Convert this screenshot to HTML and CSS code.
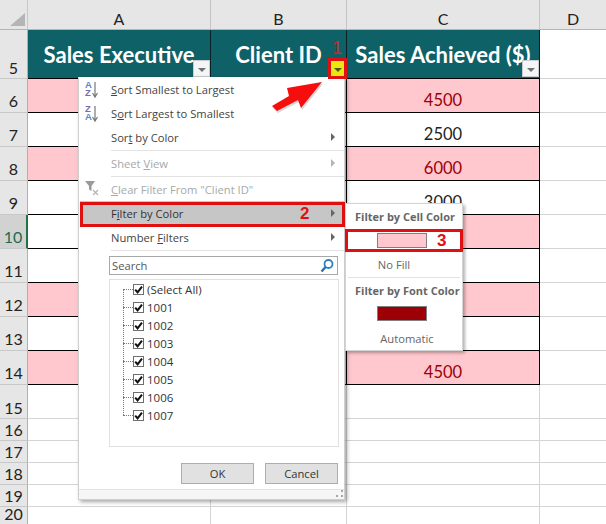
FILE: index.html
```html
<!DOCTYPE html>
<html lang="en">
<head>
<meta charset="utf-8">
<title>Filter by Color</title>
<link rel="stylesheet" href="styles.css">
</head>
<body>
<svg class="defs" width="0" height="0" aria-hidden="true">
  <symbol id="check" viewBox="0 0 13 13"><path d="M2.6 6.6 L5.4 9.8 L10.6 3" fill="none" stroke="#111" stroke-width="2.4"/></symbol>
</svg>
<div class="page">
  <div class="sheet">
    <div class="corner"><span class="tri"></span></div>
    <div class="colh">A</div><div class="colh">B</div><div class="colh">C</div><div class="colh last">D</div>

    <div class="rowh">5</div>
    <div class="hd">Sales Executive<span class="fbtn"><i></i></span></div>
    <div class="hd">Client ID<span class="fbtn hot"><i></i></span></div>
    <div class="hd">Sales Achieved ($)<span class="fbtn"><i></i></span></div>
    <div class="blank"></div>

    <div class="rowh dr">6</div><div class="d pink"></div><div class="d pink"></div><div class="d pink red">4500</div><div class="blank"></div>
    <div class="rowh dr">7</div><div class="d"></div><div class="d"></div><div class="d">2500</div><div class="blank"></div>
    <div class="rowh dr">8</div><div class="d pink"></div><div class="d pink"></div><div class="d pink red">6000</div><div class="blank"></div>
    <div class="rowh dr">9</div><div class="d"></div><div class="d"></div><div class="d">3000</div><div class="blank"></div>
    <div class="rowh dr active">10</div><div class="d"></div><div class="d pink"></div><div class="d pink red"></div><div class="blank"></div>
    <div class="rowh dr">11</div><div class="d"></div><div class="d"></div><div class="d"></div><div class="blank"></div>
    <div class="rowh dr">12</div><div class="d pink"></div><div class="d pink"></div><div class="d pink red"></div><div class="blank"></div>
    <div class="rowh dr">13</div><div class="d"></div><div class="d"></div><div class="d">3000</div><div class="blank"></div>
    <div class="rowh dr">14</div><div class="d pink"></div><div class="d pink"></div><div class="d pink red">4500</div><div class="blank"></div>

    <div class="rowh">15</div><div class="g"></div><div class="g"></div><div class="g"></div><div class="blank"></div>
    <div class="rowh">16</div><div class="g"></div><div class="g"></div><div class="g"></div><div class="blank"></div>
    <div class="rowh">17</div><div class="g"></div><div class="g"></div><div class="g"></div><div class="blank"></div>
    <div class="rowh">18</div><div class="g"></div><div class="g"></div><div class="g"></div><div class="blank"></div>
    <div class="rowh">19</div><div class="g"></div><div class="g"></div><div class="g"></div><div class="blank"></div>
    <div class="rowh">20</div><div class="g"></div><div class="g"></div><div class="g"></div><div class="blank"></div>
  </div>

  <div class="menu">
    <div class="item">
      <svg class="mi" width="22" height="20" viewBox="0 0 22 20"><text x="1" y="9" class="az a1">A</text><text x="1" y="17" class="az z1">Z</text><path d="M11 3V17M8.5 14L11 18L13.5 14" fill="none" stroke="#777" stroke-width="1.2"/></svg>
      <span><u>S</u>ort Smallest to Largest</span>
    </div>
    <div class="item">
      <svg class="mi" width="22" height="20" viewBox="0 0 22 20"><text x="1" y="9" class="az z1">Z</text><text x="1" y="17" class="az a1">A</text><path d="M11 3V17M8.5 14L11 18L13.5 14" fill="none" stroke="#777" stroke-width="1.2"/></svg>
      <span>S<u>o</u>rt Largest to Smallest</span>
    </div>
    <div class="item"><span>Sor<u>t</u> by Color</span><i class="caret"></i></div>
    <div class="sep"></div>
    <div class="item off"><span>Sheet <u>V</u>iew</span><i class="caret"></i></div>
    <div class="sep"></div>
    <div class="item off">
      <svg class="mi" width="18" height="18" viewBox="0 0 18 18"><path d="M1 2H11L7.5 7V12L5 10.5V7Z" fill="#9a9a9a"/><path d="M9 11L14 16M14 11L9 16" stroke="#b5b5b5" stroke-width="1.2"/></svg>
      <span><u>C</u>lear Filter From "Client ID"</span>
    </div>
    <div class="item cur">
      <span>F<u>i</u>lter by Color</span><i class="caret"></i>
      <b class="outline"></b>
      <b class="num n2">2</b>
    </div>
    <div class="item"><span>Number <u>F</u>ilters</span><i class="caret"></i></div>
    <div class="sep"></div>

    <div class="search">
      <span>Search</span>
      <svg width="16" height="16" viewBox="0 0 16 16"><circle cx="9.5" cy="6" r="4" fill="#fff" stroke="#2f7fc1" stroke-width="1.8"/><path d="M6.6 9L2.5 13.5" stroke="#2f6fa8" stroke-width="2.4"/></svg>
    </div>

    <div class="list">
      <div class="tree">
        <div class="tr"><i class="twig"></i><span class="cb"><svg width="11" height="11"><use href="#check"/></svg></span>(Select All)</div>
        <div class="tr"><i class="twig"></i><span class="cb"><svg width="11" height="11"><use href="#check"/></svg></span>1001</div>
        <div class="tr"><i class="twig"></i><span class="cb"><svg width="11" height="11"><use href="#check"/></svg></span>1002</div>
        <div class="tr"><i class="twig"></i><span class="cb"><svg width="11" height="11"><use href="#check"/></svg></span>1003</div>
        <div class="tr"><i class="twig"></i><span class="cb"><svg width="11" height="11"><use href="#check"/></svg></span>1004</div>
        <div class="tr"><i class="twig"></i><span class="cb"><svg width="11" height="11"><use href="#check"/></svg></span>1005</div>
        <div class="tr"><i class="twig"></i><span class="cb"><svg width="11" height="11"><use href="#check"/></svg></span>1006</div>
        <div class="tr"><i class="twig"></i><span class="cb"><svg width="11" height="11"><use href="#check"/></svg></span>1007</div>
      </div>
    </div>

    <div class="btns"><div class="btn">OK</div><div class="btn">Cancel</div></div>
    <div class="foot"><svg width="8" height="8" viewBox="0 0 8 8"><path d="M6 0h2v2H6zM6 5h2v2H6zM1 5h2v2H1z" fill="#a8a8a8"/></svg></div>
  </div>

  <div class="sub">
    <div class="subt">Filter by Cell Color</div>
    <div class="swrow"><span class="sw swp"></span><b class="num n3">3</b></div>
    <div class="opt nofill">No Fill</div>
    <div class="sep2"></div>
    <div class="subt">Filter by Font Color</div>
    <div class="swrow plain"><span class="sw swr"></span></div>
    <div class="opt">Automatic</div>
  </div>

  <span class="num n1">1</span>
  <svg class="arrow" width="66" height="46" viewBox="0 0 66 46">
    <path d="M2 26L19 16L17 8L52 2L31 28L28 20L7 31Z" fill="#000" opacity=".16" transform="translate(1 2)"/>
    <path d="M2 26L19 16L17 8L52 2L31 28L28 20L7 31Z" fill="#f60d0d"/>
  </svg>
</div>
</body>
</html>
```

FILE: styles.css
```css
* { box-sizing: border-box; }
html, body { margin: 0; padding: 0; background: #fff; overflow: hidden; }
.defs { position: absolute; }
.page { position: relative; width: 606px; height: 524px; overflow: hidden; font-family: "Open Sans", sans-serif; }

.sheet {
  display: grid;
  grid-template-columns: 28px 183px 136px 193px 66px;
  grid-template-rows: 30px 49px repeat(10, 34px) repeat(4, 22px) 18px;
  font-family: Lato, sans-serif;
  font-size: 16.5px;
  color: #222;
}
.corner { background: #e6e6e6; border-right: 1px solid #c8c8c8; border-bottom: 1px solid #b4b4b4; position: relative; }
.tri { position: absolute; left: 10px; top: 13px; width: 0; height: 0; border-left: 15px solid transparent; border-bottom: 13px solid #b5b5b5; }
.colh { background: #e6e6e6; display: flex; align-items: center; justify-content: center; padding-top: 8px; border-right: 1px solid #c4c4c4; border-bottom: 1px solid #b4b4b4; font-size: 16px; }
.colh.last { border-right: 0; }
.rowh { background: #e6e6e6; border-right: 1px solid #b0b0b0; border-bottom: 1px solid #c8c8c8; display: flex; align-items: flex-end; justify-content: center; font-size: 16px; line-height: 19px; padding-bottom: 1px; }
.rowh.dr { padding-bottom: 2px; }
.rowh.active { background: #d2d2d2; color: #1e6b4a; border-right: 2px solid #217346; }
.hd { background: #0f6168; color: #fff; font-weight: 700; font-size: 22px; display: flex; align-items: center; justify-content: center; border-right: 1px solid #0a2224; border-bottom: 1px solid #000; position: relative; white-space: nowrap; }
.fbtn { position: absolute; right: 0; bottom: 1px; width: 17px; height: 17px; background: #f4f5f6; border: 1px solid #c9ccce; display: flex; align-items: center; justify-content: center; }
.fbtn i { width: 0; height: 0; border-left: 4px solid transparent; border-right: 4px solid transparent; border-top: 4px solid #6e7072; margin-top: 2px; }
.fbtn.hot { width: 19px; height: 21px; right: -1px; bottom: -1px; background: #e9e812; border: 3px solid #e01010; z-index: 2; }
.fbtn.hot i { border-top-color: #55551a; }
.blank { border-bottom: 1px solid #d4d4d4; }
.d { border-bottom: 1px solid #000; border-right: 1px solid #000; background: #fff; display: flex; align-items: flex-end; justify-content: center; line-height: 22px; padding-bottom: 1px; color: #222; }
.d.pink { background: #ffc7ce; }
.d.red { color: #9c0006; }
.g { border-right: 1px solid #d4d4d4; border-bottom: 1px solid #d4d4d4; }

.menu { position: absolute; left: 78px; top: 77px; width: 267px; height: 423px; background: #fff; border: 1px solid #d0d0d0; border-top: 0; box-shadow: 2px 2px 4px rgba(0,0,0,.35); font-size: 11.2px; color: #444; display: flex; flex-direction: column; }
.item { height: 24px; flex: none; display: flex; align-items: center; padding: 0 9px 0 32px; position: relative; }
.item > span { flex: 1; }
.item u { text-underline-offset: 1px; }
.item.off { color: #a8a8a8; }
.item.off .caret { border-left-color: #b4b4b4; }
.item.cur { background: #c6c6c6; color: #333; margin-left: 1px; padding-left: 31px; }
.mi { position: absolute; left: 5px; top: 2px; }
.az { font: 700 9.5px "Liberation Sans", sans-serif; }
.a1 { fill: #5a86c4; }
.z1 { fill: #7d6aa8; }
.caret { width: 0; height: 0; border-top: 4px solid transparent; border-bottom: 4px solid transparent; border-left: 4px solid #666; }
.sep { height: 2px; flex: none; margin-left: 32px; border-bottom: 1px solid #e2e2e2; }
.outline { position: absolute; left: 0; right: -1px; top: 1px; height: 25px; border: 3px solid #e01010; }
.num { font-family: "Liberation Sans", sans-serif; font-weight: 700; color: #e01010; font-size: 17px; line-height: 1; }
.n2 { position: absolute; left: 220px; top: 4px; }
.n1 { position: absolute; left: 332px; top: 39px; font-weight: 400; font-size: 18px; color: #d8232a; }
.n3 { position: absolute; left: 89px; top: 0; }

.search { height: 19px; flex: none; margin: 5px 6px 0 30px; border: 1px solid #a8a8a8; display: flex; align-items: center; justify-content: space-between; padding: 0 2px; color: #555; }
.list { height: 168px; flex: none; margin: 4px 5px 0 30px; border: 1px solid #e0e0e0; position: relative; }
.tree { position: relative; margin-left: 13px; color: #333; }
.tree::before { content: ""; position: absolute; left: 0; top: 9px; bottom: 9px; border-left: 1px dotted #777; }
.tr { height: 18px; display: flex; align-items: center; font-size: 11.5px; }
.twig { width: 10px; flex: none; border-top: 1px dotted #777; }
.cb { width: 11px; height: 11px; flex: none; margin-right: 3px; border: 1px solid #6e6e6e; background: #fff; position: relative; }
.cb svg { position: absolute; left: -1px; top: -1px; display: block; }
.btns { display: flex; justify-content: flex-end; gap: 11px; margin: 16px 6px 0 0; flex: none; }
.btn { width: 73px; height: 21px; background: #e1e1e1; border: 1px solid #adadad; display: flex; align-items: center; justify-content: center; color: #333; font-size: 11.2px; }
.foot { flex: 1; margin-top: 5px; background: #f6f6f6; border-top: 1px solid #e4e4e4; display: flex; justify-content: flex-end; align-items: flex-end; padding: 0 1px 1px 0; }

.sub { position: absolute; left: 345px; top: 203px; width: 118px; height: 148px; background: #fff; border: 1px solid #d4d4d4; box-shadow: 2px 2px 3px rgba(0,0,0,.3); font-size: 11.2px; color: #666; display: flex; flex-direction: column; }
.subt { height: 25px; flex: none; display: flex; align-items: center; padding-left: 9px; font-weight: 700; font-size: 11px; white-space: nowrap; }
.swrow { height: 23px; flex: none; margin: 0 -1px 0 -1px; border: 3px solid #e01010; display: flex; align-items: center; justify-content: center; padding-right: 5px; position: relative; }
.swrow.plain { border-color: transparent; padding-bottom: 2px; }
.sw { width: 50px; height: 15px; border: 1px solid #808080; display: block; }
.swp { background: #ffc7ce; }
.swr { background: #9c0006; }
.opt { height: 25px; flex: none; display: flex; align-items: center; justify-content: center; padding-left: 6px; }
.opt.nofill { padding: 0 20px 0 0; }
.sep2 { height: 1px; flex: none; margin: 0 2px; background: #e2e2e2; }

.arrow { position: absolute; left: 270px; top: 80px; }
```
